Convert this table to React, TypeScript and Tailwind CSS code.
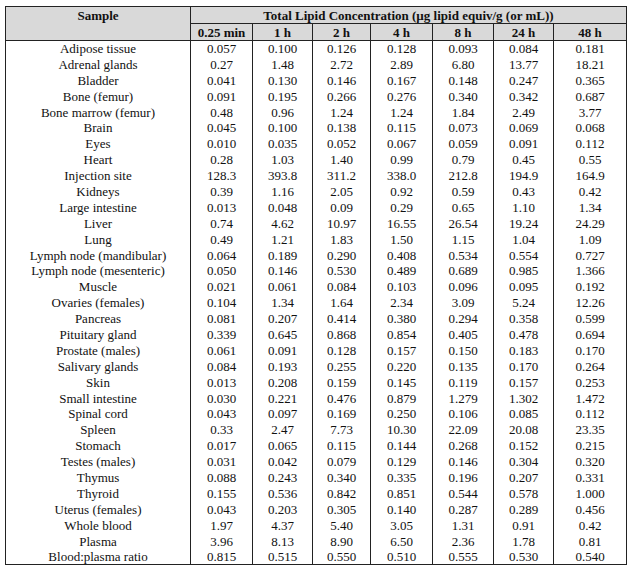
import React from "react";

const times = ["0.25 min", "1 h", "2 h", "4 h", "8 h", "24 h", "48 h"];

const rows: [string, string[]][] = [
  ["Adipose tissue", ["0.057", "0.100", "0.126", "0.128", "0.093", "0.084", "0.181"]],
  ["Adrenal glands", ["0.27", "1.48", "2.72", "2.89", "6.80", "13.77", "18.21"]],
  ["Bladder", ["0.041", "0.130", "0.146", "0.167", "0.148", "0.247", "0.365"]],
  ["Bone (femur)", ["0.091", "0.195", "0.266", "0.276", "0.340", "0.342", "0.687"]],
  ["Bone marrow (femur)", ["0.48", "0.96", "1.24", "1.24", "1.84", "2.49", "3.77"]],
  ["Brain", ["0.045", "0.100", "0.138", "0.115", "0.073", "0.069", "0.068"]],
  ["Eyes", ["0.010", "0.035", "0.052", "0.067", "0.059", "0.091", "0.112"]],
  ["Heart", ["0.28", "1.03", "1.40", "0.99", "0.79", "0.45", "0.55"]],
  ["Injection site", ["128.3", "393.8", "311.2", "338.0", "212.8", "194.9", "164.9"]],
  ["Kidneys", ["0.39", "1.16", "2.05", "0.92", "0.59", "0.43", "0.42"]],
  ["Large intestine", ["0.013", "0.048", "0.09", "0.29", "0.65", "1.10", "1.34"]],
  ["Liver", ["0.74", "4.62", "10.97", "16.55", "26.54", "19.24", "24.29"]],
  ["Lung", ["0.49", "1.21", "1.83", "1.50", "1.15", "1.04", "1.09"]],
  ["Lymph node (mandibular)", ["0.064", "0.189", "0.290", "0.408", "0.534", "0.554", "0.727"]],
  ["Lymph node (mesenteric)", ["0.050", "0.146", "0.530", "0.489", "0.689", "0.985", "1.366"]],
  ["Muscle", ["0.021", "0.061", "0.084", "0.103", "0.096", "0.095", "0.192"]],
  ["Ovaries (females)", ["0.104", "1.34", "1.64", "2.34", "3.09", "5.24", "12.26"]],
  ["Pancreas", ["0.081", "0.207", "0.414", "0.380", "0.294", "0.358", "0.599"]],
  ["Pituitary gland", ["0.339", "0.645", "0.868", "0.854", "0.405", "0.478", "0.694"]],
  ["Prostate (males)", ["0.061", "0.091", "0.128", "0.157", "0.150", "0.183", "0.170"]],
  ["Salivary glands", ["0.084", "0.193", "0.255", "0.220", "0.135", "0.170", "0.264"]],
  ["Skin", ["0.013", "0.208", "0.159", "0.145", "0.119", "0.157", "0.253"]],
  ["Small intestine", ["0.030", "0.221", "0.476", "0.879", "1.279", "1.302", "1.472"]],
  ["Spinal cord", ["0.043", "0.097", "0.169", "0.250", "0.106", "0.085", "0.112"]],
  ["Spleen", ["0.33", "2.47", "7.73", "10.30", "22.09", "20.08", "23.35"]],
  ["Stomach", ["0.017", "0.065", "0.115", "0.144", "0.268", "0.152", "0.215"]],
  ["Testes (males)", ["0.031", "0.042", "0.079", "0.129", "0.146", "0.304", "0.320"]],
  ["Thymus", ["0.088", "0.243", "0.340", "0.335", "0.196", "0.207", "0.331"]],
  ["Thyroid", ["0.155", "0.536", "0.842", "0.851", "0.544", "0.578", "1.000"]],
  ["Uterus (females)", ["0.043", "0.203", "0.305", "0.140", "0.287", "0.289", "0.456"]],
  ["Whole blood", ["1.97", "4.37", "5.40", "3.05", "1.31", "0.91", "0.42"]],
  ["Plasma", ["3.96", "8.13", "8.90", "6.50", "2.36", "1.78", "0.81"]],
  ["Blood:plasma ratio", ["0.815", "0.515", "0.550", "0.510", "0.555", "0.530", "0.540"]],
];

export default function App() {
  return (
    <div className="w-[630px] h-[572px] bg-white pt-[6px] pl-[5px] font-['Liberation_Serif',serif] text-[13px] text-[#111]">
      <table className="table-fixed border-collapse border border-[#222] w-[622px]">
        <colgroup>
          <col className="w-[185px]" />
          <col className="w-[62px]" />
          <col className="w-[60px]" />
          <col className="w-[58px]" />
          <col className="w-[62px]" />
          <col className="w-[61px]" />
          <col className="w-[60px]" />
          <col className="w-[73px]" />
        </colgroup>
        <thead className="bg-[#d9d9d9] font-bold">
          <tr className="h-[17px]">
            <th
              rowSpan={2}
              className="border border-[#222] text-center align-top leading-none pt-[2px]"
            >
              Sample
            </th>
            <th colSpan={7} className="border border-[#222] text-center leading-none">
              Total Lipid Concentration (µg lipid equiv/g (or mL))
            </th>
          </tr>
          <tr className="h-[17px]">
            {times.map((t) => (
              <th key={t} className="border border-[#222] text-center leading-none">
                {t}
              </th>
            ))}
          </tr>
        </thead>
        <tbody>
          {rows.map(([name, vals]) => (
            <tr key={name} className="h-[15.9px]">
              <td className="border-x border-[#222] text-center leading-none p-0">{name}</td>
              {vals.map((v, i) => (
                <td key={i} className="border-x border-[#222] text-center leading-none p-0">
                  {v}
                </td>
              ))}
            </tr>
          ))}
        </tbody>
      </table>
    </div>
  );
}
